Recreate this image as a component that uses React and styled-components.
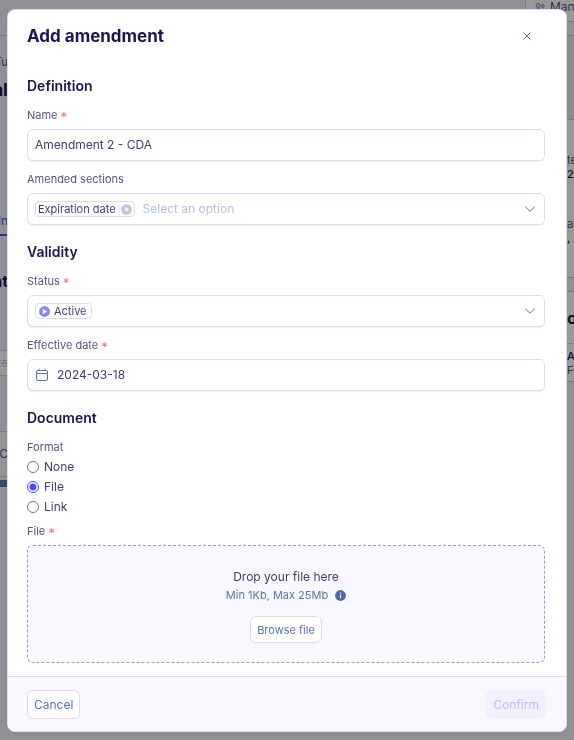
import React, { useState } from "react"
import styled, { createGlobalStyle, ThemeProvider } from "styled-components"

const theme = {
    heading: "#1c1551",
    text: "#453d72",
    label: "#5a5480",
    link: "#5a73b3",
    placeholder: "#b5c0dd",
    border: "#d8deee",
    surface: "#f8f9fe",
    page: "#eef0f7",
    accent: "#4f46ff",
    required: "#ff7875",
}

const GlobalStyle = createGlobalStyle`
    *{
        box-sizing: border-box;
    }
    body{
        margin: 0;
        background: ${theme.page};
        font-family: Inter, "Open Sans", sans-serif;
        font-size: 12px;
        line-height: 20px;
        color: ${theme.text};
    }
    button, input{
        font: inherit;
        color: inherit;
    }
`

/* page behind the dialog */
const Page = styled.div`
    display: flex;
    justify-content: space-between;
    min-height: 100vh;
    overflow: hidden;
`
const LeftEdge = styled.div`
    width: 8px;
    display: flex;
    flex-direction: column;
`
const EdgeRow = styled.div`
    display: flex;
    justify-content: flex-end;
    align-items: center;
    flex: none;
    height: ${props => props.$height}px;
    overflow: hidden;
    white-space: nowrap;
    background: ${props => props.$bg || "transparent"};
    border-bottom: ${props => props.$line || "none"};
    color: ${props => props.$color || props.theme.label};
    font-size: ${props => props.$size || 12}px;
    font-weight: ${props => props.$bold ? 700 : 400};
`
const RightEdge = styled.div`
    width: 49px;
    height: 382px;
    display: flex;
    flex-direction: column;
    overflow: hidden;
    border-bottom: 1px solid #c9cddb;
`
const TopAction = styled.div`
    display: flex;
    align-items: center;
    gap: 5px;
    height: 22px;
    padding: 0 0 7px 9px;
    background: #ffffff;
    border-left: 1px solid #c9cddb;
    border-bottom: 1px solid #c9cddb;
    color: ${props => props.theme.label};
    white-space: nowrap;
    flex: none;

    svg{
        flex: none;
    }
`
const Band = styled.div`
    flex: none;
    height: ${props => props.$height}px;
    background: ${props => props.$bg};
    border-bottom: 1px solid #c9cddb;
`
const SideCard = styled.div`
    flex: none;
    display: flex;
    flex-direction: column;
    justify-content: center;
    gap: ${props => props.$gap || 0}px;
    height: ${props => props.$height}px;
    padding-left: 42px;
    background: #ffffff;
    border-bottom: 1px solid #c9cddb;
    font-size: 11px;
    line-height: 14px;
    white-space: nowrap;
    color: ${props => props.theme.label};

    strong{
        display: block;
        font-weight: 500;
        color: ${props => props.theme.heading};
    }
    h3{
        margin: 0;
        font-size: 16px;
        line-height: 20px;
        color: ${props => props.theme.heading};
    }
`

/* dialog */
const Overlay = styled.div`
    position: fixed;
    inset: 0;
    display: flex;
    justify-content: center;
    align-items: flex-start;
    padding: 9px 7px;
    overflow: auto;
    background: rgba(0, 0, 0, .4);
`
const Dialog = styled.form`
    width: 100%;
    max-width: 720px;
    background: #ffffff;
    border: 1px solid ${props => props.theme.border};
    border-radius: 8px;
    overflow: hidden;
`
const Header = styled.header`
    display: flex;
    justify-content: space-between;
    align-items: center;
    padding: 14px 31px 0 19px;
`
const Title = styled.h1`
    margin: 0;
    font-size: 17px;
    line-height: 24px;
    font-weight: 700;
    color: ${props => props.theme.heading};
`
const IconButton = styled.button`
    display: flex;
    padding: 4px;
    border: none;
    background: none;
    color: ${props => props.theme.link};
    cursor: pointer;
`
const Body = styled.div`
    padding: 11px 21px 13px 19px;
`
const SectionTitle = styled.h2`
    margin: 15px 0 7px;
    font-size: 14px;
    line-height: 24px;
    font-weight: 600;
    color: ${props => props.theme.heading};
`
const Field = styled.div`
    & + &{
        margin-top: 8px;
    }
`
const Label = styled.label`
    display: block;
    height: 20px;
    margin-bottom: 4px;
    font-size: 11px;
    color: ${props => props.theme.label};
`
const Required = styled.span`
    margin-left: 3px;
    font-size: 13px;
    font-weight: 500;
    line-height: 1;
    vertical-align: -3px;
    color: ${props => props.theme.required};
`
const Control = styled.div`
    display: flex;
    align-items: center;
    gap: 8px;
    height: 32px;
    padding: 0 8px 0 7px;
    background: #ffffff;
    border: 1px solid ${props => props.theme.border};
    border-radius: 6px;
    box-shadow: 0 1px 1px rgba(90, 115, 179, .1);

    &:focus-within{
        border-color: ${props => props.theme.accent};
    }
    > svg{
        flex: none;
        color: ${props => props.theme.link};
    }
`
const TextInput = styled.input`
    flex: 1;
    min-width: 0;
    padding: 0;
    border: none;
    outline: none;
    background: none;

    &::placeholder{
        color: ${props => props.theme.placeholder};
        opacity: 1;
    }
`
const Tag = styled.span`
    display: flex;
    align-items: center;
    gap: ${props => props.$closable ? 5 : 4}px;
    height: 16px;
    padding: 0 ${props => props.$closable ? 2 : 4}px 0 ${props => props.$closable ? 2 : 3}px;
    border: 1px solid ${props => props.theme.border};
    border-radius: 4px;
    font-size: 11px;
    line-height: 14px;
    white-space: nowrap;

    button{
        padding: 0;
    }
`
const Choices = styled.fieldset`
    margin: 0 0 4px;
    padding: 0;
    border: none;

    legend{
        padding: 0;
        font-size: 11px;
        color: ${props => props.theme.label};
    }
`
const Choice = styled.label`
    display: flex;
    align-items: center;
    gap: 5px;
    height: 20px;
`
const Radio = styled.input`
    appearance: none;
    width: 12px;
    height: 12px;
    margin: 0;
    border: 1px solid #767676;
    border-radius: 50%;

    &:checked{
        border-color: ${props => props.theme.accent};
        background: radial-gradient(circle, ${props => props.theme.accent} 3px, #ffffff 4px);
    }
`
const DropZone = styled.div`
    display: flex;
    flex-direction: column;
    align-items: center;
    padding: 22px 0 19px;
    background: ${props => props.theme.surface};
    border: 1px dashed #8c9fcd;
    border-radius: 6px;
    line-height: 18px;
`
const Hint = styled.div`
    display: flex;
    align-items: center;
    gap: 7px;
    margin-bottom: 12px;
    font-size: 11px;
    color: ${props => props.theme.link};
`
const Button = styled.button`
    height: ${props => props.$small ? 27 : 29}px;
    padding: 0 6px;
    border: 1px solid ${props => props.theme.border};
    border-radius: 6px;
    background: #ffffff;
    color: ${props => props.theme.link};
    font-size: ${props => props.$small ? 11 : 12}px;
    cursor: pointer;

    &:disabled{
        border-color: #f0f1fa;
        background: #f0f1fa;
        color: #beb9ff;
        cursor: default;
    }
`
const Footer = styled.footer`
    display: flex;
    justify-content: space-between;
    padding: 13px 20px 12px 19px;
    background: ${props => props.theme.surface};
    border-top: 1px solid ${props => props.theme.border};
`

const Chevron = () => (
    <svg width="12" height="12" viewBox="0 0 12 12" fill="none" stroke="currentColor" strokeLinecap="round" strokeLinejoin="round">
        <path d="M1.5 4 6 8.2 10.5 4" />
    </svg>
)

const CloseIcon = () => (
    <svg width="8" height="8" viewBox="0 0 8 8" fill="none" stroke="currentColor" strokeLinecap="round">
        <path d="M.7.7l6.6 6.6M7.3.7.7 7.3" />
    </svg>
)

const RemoveIcon = () => (
    <svg width="11" height="11" viewBox="0 0 11 11">
        <circle cx="5.5" cy="5.5" r="5.3" fill="#b9c4e0" />
        <path d="M4 4l3 3M7 4 4 7" stroke="#fff" strokeWidth="1.1" strokeLinecap="round" />
    </svg>
)

const PlayIcon = () => (
    <svg width="11" height="11" viewBox="0 0 11 11">
        <circle cx="5.5" cy="5.5" r="5.4" fill="#8b83ff" />
        <path d="M4 3.2v4.6l3.9-2.3z" fill="#fff" stroke="#fff" strokeWidth=".5" strokeLinejoin="round" />
    </svg>
)

const CalendarIcon = () => (
    <svg width="14" height="14" viewBox="0 0 14 14" fill="none" stroke="currentColor" strokeLinecap="round">
        <rect x="1.5" y="2.5" width="11" height="10" rx="1.5" />
        <path d="M1.5 5.5h11M4 1.2v1.3M10 1.2v1.3" />
    </svg>
)

const InfoIcon = () => (
    <svg width="11" height="11" viewBox="0 0 11 11">
        <circle cx="5.5" cy="5.5" r="5.4" fill="#5069ad" />
        <path d="M5.5 5v3" stroke="#fff" strokeWidth="1.1" />
        <circle cx="5.5" cy="3.2" r=".7" fill="#fff" />
    </svg>
)

const UsersIcon = () => (
    <svg width="10" height="10" viewBox="0 0 10 10" fill="none" stroke="#5a73b3">
        <circle cx="3" cy="3.5" r="1.9" />
        <circle cx="7.8" cy="4" r="1.4" />
        <path d="M.5 9c0-3 5-3 5 0zM6.5 7.5c1.5-.8 3 0 3 1.5H7" />
    </svg>
)

function Backdrop(){
    const line = "1px solid #c9cddb"

    return (
        <Page aria-hidden="true">
            <LeftEdge>
                <EdgeRow $height={36} $line={line} />
                <EdgeRow $height={10} />
                <EdgeRow $height={32}>Tu</EdgeRow>
                <EdgeRow $height={24} $size={18} $bold $color={theme.heading}>al</EdgeRow>
                <EdgeRow $height={106} />
                <EdgeRow $height={28} $line="2px solid #4f46ff" $color="#4f46ff">In</EdgeRow>
                <EdgeRow $height={32} />
                <EdgeRow $height={26} $size={16} $bold $color={theme.heading}>nt</EdgeRow>
                <EdgeRow $height={57} $line={line} />
                <EdgeRow $height={25} $bg="#ffffff" $line={line} $color="#b5c0dd">ke</EdgeRow>
                <EdgeRow $height={56} $line={line} />
                <EdgeRow $height={45} $bg="#f7f8fc" $line={line}>C</EdgeRow>
                <EdgeRow $height={3} />
                <EdgeRow $height={7} $bg="#5a73b3" />
            </LeftEdge>
            <RightEdge>
                <TopAction><UsersIcon />Man</TopAction>
                <Band $height={14} $bg="#eef0f7" />
                <Band $height={84} $bg="#e8eaf2" />
                <SideCard $height={158} $gap={36}>
                    <div>te<strong>2</strong></div>
                    <div>at<strong>, 2</strong></div>
                </SideCard>
                <Band $height={14} $bg="#eef0f7" />
                <SideCard $height={52}><h3>o</h3></SideCard>
                <SideCard $height={38}><div><strong>A</strong>Fe</div></SideCard>
            </RightEdge>
        </Page>
    )
}

function App(){
    const [name, setName] = useState("Amendment 2 - CDA")
    const [date, setDate] = useState("2024-03-18")
    const [format, setFormat] = useState("File")

    return (
        <ThemeProvider theme={theme}>
            <GlobalStyle />
            <Backdrop />
            <Overlay>
                <Dialog role="dialog" aria-labelledby="title" onSubmit={e => e.preventDefault()}>
                    <Header>
                        <Title id="title">Add amendment</Title>
                        <IconButton type="button" aria-label="Close"><CloseIcon /></IconButton>
                    </Header>
                    <Body>
                        <SectionTitle>Definition</SectionTitle>
                        <Field>
                            <Label htmlFor="name">Name<Required>*</Required></Label>
                            <Control>
                                <TextInput id="name" value={name} onChange={e => setName(e.target.value)} />
                            </Control>
                        </Field>
                        <Field>
                            <Label htmlFor="sections">Amended sections</Label>
                            <Control>
                                <Tag $closable>
                                    Expiration date
                                    <IconButton type="button" aria-label="Remove"><RemoveIcon /></IconButton>
                                </Tag>
                                <TextInput id="sections" role="combobox" aria-expanded="false" placeholder="Select an option" />
                                <Chevron />
                            </Control>
                        </Field>

                        <SectionTitle>Validity</SectionTitle>
                        <Field>
                            <Label htmlFor="status">Status<Required>*</Required></Label>
                            <Control>
                                <Tag><PlayIcon />Active</Tag>
                                <TextInput id="status" role="combobox" aria-expanded="false" />
                                <Chevron />
                            </Control>
                        </Field>
                        <Field>
                            <Label htmlFor="date">Effective date<Required>*</Required></Label>
                            <Control>
                                <CalendarIcon />
                                <TextInput id="date" value={date} onChange={e => setDate(e.target.value)} />
                            </Control>
                        </Field>

                        <SectionTitle>Document</SectionTitle>
                        <Choices>
                            <legend>Format</legend>
                            {["None", "File", "Link"].map(option => (
                                <Choice key={option}>
                                    <Radio type="radio" name="format" checked={format === option} onChange={() => setFormat(option)} />
                                    {option}
                                </Choice>
                            ))}
                        </Choices>
                        <Label htmlFor="browse">File<Required>*</Required></Label>
                        <DropZone>
                            <div>Drop your file here</div>
                            <Hint>Min 1Kb, Max 25Mb <InfoIcon /></Hint>
                            <Button type="button" id="browse" $small>Browse file</Button>
                        </DropZone>
                    </Body>
                    <Footer>
                        <Button type="button">Cancel</Button>
                        <Button type="submit" disabled>Confirm</Button>
                    </Footer>
                </Dialog>
            </Overlay>
        </ThemeProvider>
    )
}

export default App
